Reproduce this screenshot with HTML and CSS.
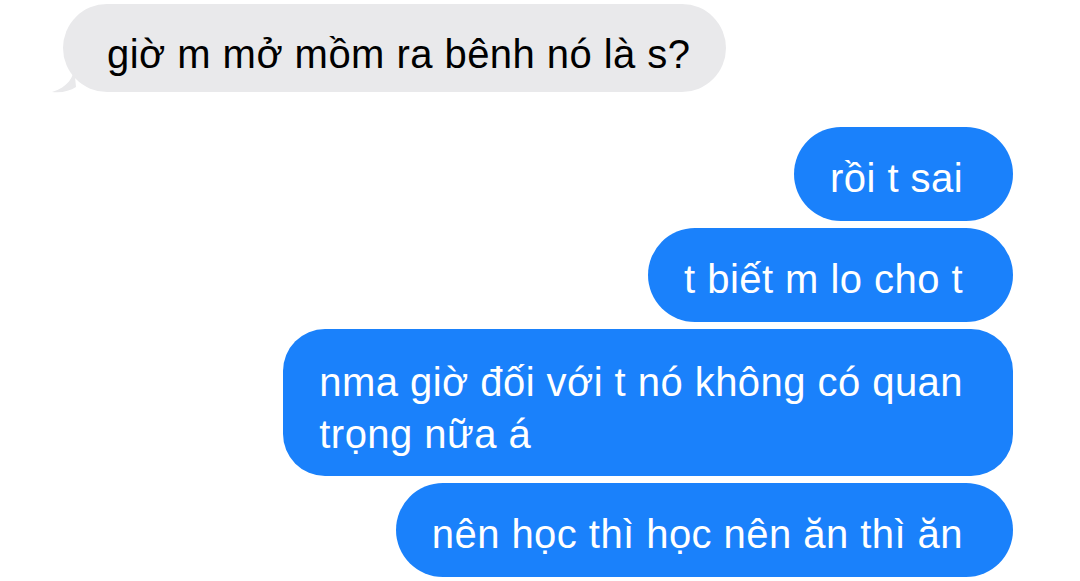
FILE: index.html
```html
<!DOCTYPE html>
<html lang="vi">
<head>
<meta charset="utf-8">
<link rel="stylesheet" href="styles.css">
</head>
<body>
<div class="thread">
  <div class="row in">
    <div class="bubble grey">
      <svg class="tail" width="24" height="26" viewBox="0 0 24 26"><path d="M22 0 C22 10 16 20 0 25 C10 26 18 24 24 20 Z" fill="#e9e9eb"/></svg>
      giờ m mở mồm ra bênh nó là s?
    </div>
  </div>
  <div class="row out first"><div class="bubble blue">rồi t sai</div></div>
  <div class="row out"><div class="bubble blue">t biết m lo cho t</div></div>
  <div class="row out"><div class="bubble blue multi">nma giờ đối với t nó không có quan<br>trọng nữa á</div></div>
  <div class="row out"><div class="bubble blue">nên học thì học nên ăn thì ăn</div></div>
</div>
</body>
</html>
```
FILE: styles.css
```css
html, body {
  margin: 0;
  padding: 0;
  background: #ffffff;
}
body {
  width: 1080px;
  height: 581px;
  overflow: hidden;
  font-family: "Liberation Sans", Arial, sans-serif;
}
.thread {
  display: flex;
  flex-direction: column;
  gap: 7px;
  padding: 4px 67px 0 63px;
}
.row {
  display: flex;
}
.row.in { justify-content: flex-start; }
.row.out { justify-content: flex-end; }
.row.first { margin-top: 28px; }
.bubble {
  position: relative;
  font-size: 40px;
  line-height: 52px;
  letter-spacing: 0.45px;
  white-space: nowrap;
}
.grey {
  background: #e9e9eb;
  color: #000;
  padding: 24px 35px 12px 44px;
  border-radius: 44px;
}
.tail {
  position: absolute;
  left: -11px;
  bottom: -1px;
}
.blue {
  background: #1a81fb;
  color: #fff;
  padding: 25px 50px 17px 36px;
  border-radius: 47px;
}
.blue.multi {
  border-radius: 42px;
  padding-top: 27px;
  padding-bottom: 16px;
}
```
